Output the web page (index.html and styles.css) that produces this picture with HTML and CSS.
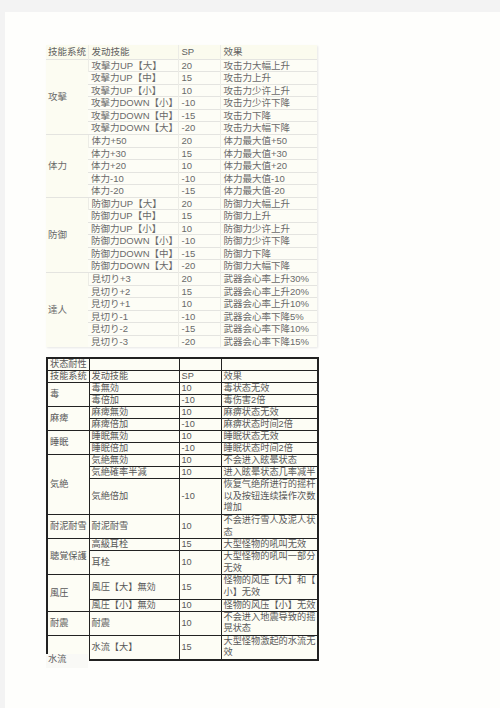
FILE: index.html
```html
<!DOCTYPE html>
<html lang="zh">
<head>
<meta charset="utf-8">
<link rel="stylesheet" href="styles.css">
</head>
<body>
<div class="page">
  <table class="t1">
    <colgroup><col class="c1"><col class="c2"><col class="c3"><col class="c4"></colgroup>
    <tr class="hd"><td>技能系统</td><td>发动技能</td><td>SP</td><td>效果</td></tr>
    <tr><td class="grp" rowspan="6">攻擊</td><td>攻擊力UP【大】</td><td>20</td><td>攻击力大幅上升</td></tr>
    <tr><td>攻擊力UP【中】</td><td>15</td><td>攻击力上升</td></tr>
    <tr><td>攻擊力UP【小】</td><td>10</td><td>攻击力少许上升</td></tr>
    <tr><td>攻擊力DOWN【小】</td><td>-10</td><td>攻击力少许下降</td></tr>
    <tr><td>攻擊力DOWN【中】</td><td>-15</td><td>攻击力下降</td></tr>
    <tr><td>攻擊力DOWN【大】</td><td>-20</td><td>攻击力大幅下降</td></tr>
    <tr><td class="grp" rowspan="5">体力</td><td>体力+50</td><td>20</td><td>体力最大值+50</td></tr>
    <tr><td>体力+30</td><td>15</td><td>体力最大值+30</td></tr>
    <tr><td>体力+20</td><td>10</td><td>体力最大值+20</td></tr>
    <tr><td>体力-10</td><td>-10</td><td>体力最大值-10</td></tr>
    <tr><td>体力-20</td><td>-15</td><td>体力最大值-20</td></tr>
    <tr><td class="grp" rowspan="6">防御</td><td>防御力UP【大】</td><td>20</td><td>防御力大幅上升</td></tr>
    <tr><td>防御力UP【中】</td><td>15</td><td>防御力上升</td></tr>
    <tr><td>防御力UP【小】</td><td>10</td><td>防御力少许上升</td></tr>
    <tr><td>防御力DOWN【小】</td><td>-10</td><td>防御力少许下降</td></tr>
    <tr><td>防御力DOWN【中】</td><td>-15</td><td>防御力下降</td></tr>
    <tr><td>防御力DOWN【大】</td><td>-20</td><td>防御力大幅下降</td></tr>
    <tr><td class="grp" rowspan="6">達人</td><td>見切り+3</td><td>20</td><td>武器会心率上升30%</td></tr>
    <tr><td>見切り+2</td><td>15</td><td>武器会心率上升20%</td></tr>
    <tr><td>見切り+1</td><td>10</td><td>武器会心率上升10%</td></tr>
    <tr><td>見切り-1</td><td>-10</td><td>武器会心率下降5%</td></tr>
    <tr><td>見切り-2</td><td>-15</td><td>武器会心率下降10%</td></tr>
    <tr><td>見切り-3</td><td>-20</td><td>武器会心率下降15%</td></tr>
  </table>

  <table class="t2">
    <colgroup><col class="c1"><col class="c2"><col class="c3"><col class="c4"></colgroup>
    <tr class="top"><td>状态耐性</td><td></td><td></td><td></td></tr>
    <tr class="g"><td>技能系统</td><td>发动技能</td><td>SP</td><td>效果</td></tr>
    <tr class="g"><td class="grp" rowspan="2">毒</td><td>毒無効</td><td>10</td><td>毒状态无效</td></tr>
    <tr class="s"><td>毒倍加</td><td>-10</td><td>毒伤害2倍</td></tr>
    <tr class="g"><td class="grp" rowspan="2">麻痺</td><td>麻痺無効</td><td>10</td><td>麻痹状态无效</td></tr>
    <tr class="s"><td>麻痺倍加</td><td>-10</td><td>麻痹状态时间2倍</td></tr>
    <tr class="g"><td class="grp" rowspan="2">睡眠</td><td>睡眠無効</td><td>10</td><td>睡眠状态无效</td></tr>
    <tr class="s"><td>睡眠倍加</td><td>-10</td><td>睡眠状态时间2倍</td></tr>
    <tr class="g"><td class="grp" rowspan="3">気絶</td><td>気絶無効</td><td>10</td><td>不会进入眩晕状态</td></tr>
    <tr class="s"><td>気絶確率半減</td><td>10</td><td class="nw">进入眩晕状态几率减半</td></tr>
    <tr class="s"><td>気絶倍加</td><td>-10</td><td class="wr">恢复气绝所进行的摇杆以及按钮连续操作次数增加</td></tr>
    <tr class="g"><td class="grp">耐泥耐雪</td><td>耐泥耐雪</td><td>10</td><td class="wr">不会进行雪人及泥人状态</td></tr>
    <tr class="g"><td class="grp" rowspan="2">聴覚保護</td><td>高級耳栓</td><td>15</td><td>大型怪物的吼叫无效</td></tr>
    <tr class="s"><td>耳栓</td><td>10</td><td class="wr">大型怪物的吼叫一部分无效</td></tr>
    <tr class="g"><td class="grp" rowspan="2">風圧</td><td>風圧【大】無効</td><td>15</td><td class="wr">怪物的风压【大】和【小】无效</td></tr>
    <tr class="s"><td>風圧【小】無効</td><td>10</td><td>怪物的风压【小】无效</td></tr>
    <tr class="g"><td class="grp">耐震</td><td>耐震</td><td>10</td><td class="wr">不会进入地震导致的摇晃状态</td></tr>
    <tr class="g last"><td class="grp open"></td><td>水流【大】</td><td>15</td><td class="wr">大型怪物激起的水流无效</td></tr>
  </table>
  <div class="tail">水流</div>
</div>
</body>
</html>
```

FILE: styles.css
```css
html, body {
  margin: 0;
  padding: 0;
}
body {
  background: #f3f3f3;
  width: 500px;
  height: 708px;
  overflow: hidden;
  font-family: "Liberation Sans", "Noto Sans CJK SC", sans-serif;
}
.page {
  margin: 12px 0 0 5px;
  height: 696px;
  background: #fefefc;
  padding: 33px 0 0 41px;
  box-sizing: border-box;
}
table {
  border-collapse: collapse;
  table-layout: fixed;
}
.c1 { width: 42px; }
.c2 { width: 90px; }
.c3 { width: 42px; }
.c4 { width: 97px; }

/* first table */
.t1 {
  width: 271px;
  background: #fdfdf6;
  color: #6a6a6a;
  font-size: 9.5px;
  box-shadow: 1px 1px 2px #e6e6e6;
}
.t1 td {
  padding: 0 0 0 3px;
  line-height: 11.55px;
  border-top: 1px solid #e4e4e0;
  border-left: 1px solid #ecece6;
  white-space: nowrap;
  overflow: hidden;
}
.t1 td:first-child { border-left: none; }
.t1 .hd td {
  line-height: 13.7px;
  border-top: none;
  background: #fbfbee;
  color: #606060;
}
.t1 .hd td:first-child { padding-left: 2px; }
.t1 .grp {
  padding-left: 2px;
  vertical-align: middle;
  background: #fcfcf2;
  border-top: 1px solid #e4e4e0;
}

/* second table */
.t2 {
  width: 272px;
  margin-top: 10px;
  background: #fdfdf5;
  color: #585858;
  font-size: 9.2px;
}
.t2 td {
  padding: 0 0 0 2px;
  line-height: 11px;
  border: 1px solid #222;
  vertical-align: middle;
  overflow: hidden;
}
.t2 tr.top td { border-top: 2px solid #222; }
.t2 tr.s td { border-top: 1px solid #8a8a8a; }
.t2 td:first-child { border-left: 2px solid #222; }
.t2 td:last-child { border-right: 2px solid #222; }
.t2 tr.s td:first-child { border-left: 1px solid #222; }
.t2 tr.s td:last-child { border-right: 2px solid #222; }
.t2 .grp { border-top: 1px solid #222; }
.t2 .nw { white-space: nowrap; }
.t2 .wr { line-height: 11.6px; word-break: break-all; line-break: anywhere; }
.t2 tr.last td { border-bottom: 2px solid #222; }
.t2 tr.last td.open { border-bottom: none; }

.tail {
  width: 40px;
  margin-top: -7px;
  padding: 0 0 3px 2px;
  font-size: 9.2px;
  line-height: 11px;
  color: #606060;
  background: #f9f9f6;
}
```
